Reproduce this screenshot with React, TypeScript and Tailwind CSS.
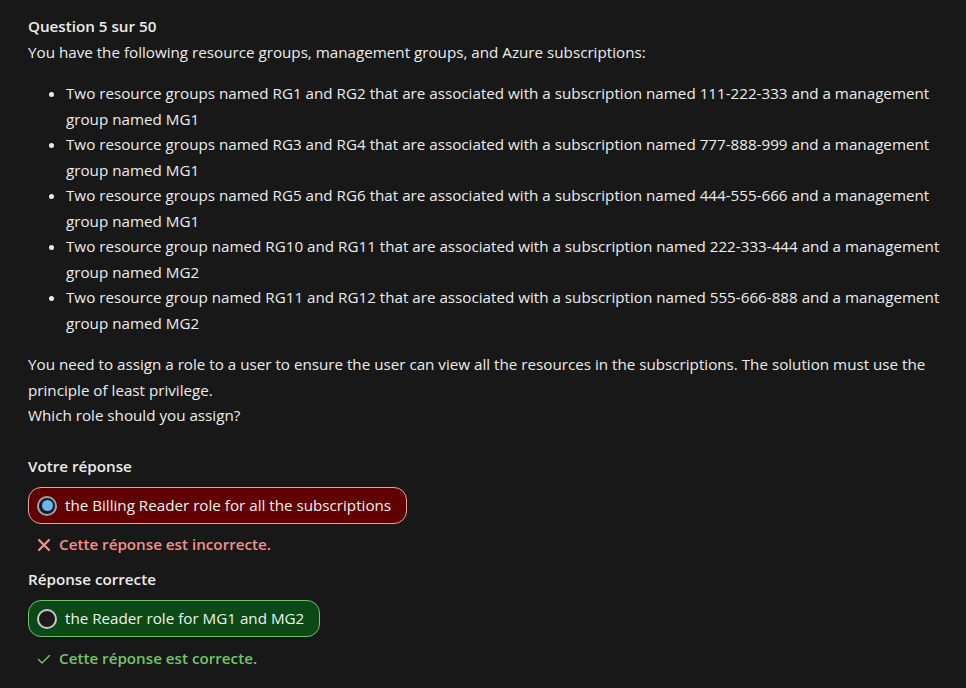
import React from "react";

const items = [
  "Two resource groups named RG1 and RG2 that are associated with a subscription named 111-222-333 and a management group named MG1",
  "Two resource groups named RG3 and RG4 that are associated with a subscription named 777-888-999 and a management group named MG1",
  "Two resource groups named RG5 and RG6 that are associated with a subscription named 444-555-666 and a management group named MG1",
  "Two resource group named RG10 and RG11 that are associated with a subscription named 222-333-444 and a management group named MG2",
  "Two resource group named RG11 and RG12 that are associated with a subscription named 555-666-888 and a management group named MG2",
];

export default function App() {
  return (
    <div
      className="min-h-[688px] w-full bg-[#181818] text-[#ececec] text-[15.2px] leading-[25.5px] pl-[28px] pr-[8px] pt-[14px]"
      style={{ fontFamily: '"Open Sans", "Noto Sans", sans-serif' }}
    >
      <div className="font-semibold">Question 5 sur 50</div>
      <p>You have the following resource groups, management groups, and Azure subscriptions:</p>
      <ul className="mt-[16px] pl-[38px] list-disc marker:text-[#ececec]">
        {items.map((t, i) => (
          <li key={i}>{t}</li>
        ))}
      </ul>
      <p className="mt-[16px] pr-[20px]">
        You need to assign a role to a user to ensure the user can view all the resources in the subscriptions. The solution must use the principle of least privilege.
        <br />
        Which role should you assign?
      </p>
      <div className="mt-[25px] font-semibold">Votre réponse</div>
      <div className="mt-[8px] inline-flex items-center gap-[8px] h-[37px] pl-[8px] pr-[15px] rounded-[13px] border border-[#e9a0a0] bg-[#600000] text-[#f0f0f0]">
        <span className="w-[20px] h-[20px] rounded-full border-2 border-[#9aa4ad] bg-[#1b1b1b] flex items-center justify-center">
          <span className="w-[11px] h-[11px] rounded-full bg-[#6cb6f0]" />
        </span>
        <span>the Billing Reader role for all the subscriptions</span>
      </div>
      <div className="mt-[8px] flex items-center gap-[8px] pl-[9px] text-[#f4908a] font-semibold">
        <svg width="14" height="14" viewBox="0 0 14 14" fill="none" stroke="#f4908a" strokeWidth="2.2" strokeLinecap="round">
          <path d="M2 2 L12 12 M12 2 L2 12" />
        </svg>
        <span>Cette réponse est incorrecte.</span>
      </div>
      <div className="mt-[9px] font-semibold">Réponse correcte</div>
      <div className="mt-[8px] inline-flex items-center gap-[8px] h-[37px] pl-[8px] pr-[15px] rounded-[13px] border border-[#6cc36c] bg-[#0b4a17] text-[#f0f0f0]">
        <span className="w-[20px] h-[20px] rounded-full border-2 border-[#c8c8c8] bg-[#1b1b1b]" />
        <span>the Reader role for MG1 and MG2</span>
      </div>
      <div className="mt-[9px] flex items-center gap-[8px] pl-[9px] text-[#73c46a] font-semibold">
        <svg width="14" height="14" viewBox="0 0 14 14" fill="none" stroke="#73c46a" strokeWidth="1.4" strokeLinecap="round" strokeLinejoin="round">
          <path d="M1.5 7.5 L5 11 L12.5 3.5" />
        </svg>
        <span>Cette réponse est correcte.</span>
      </div>
    </div>
  );
}
